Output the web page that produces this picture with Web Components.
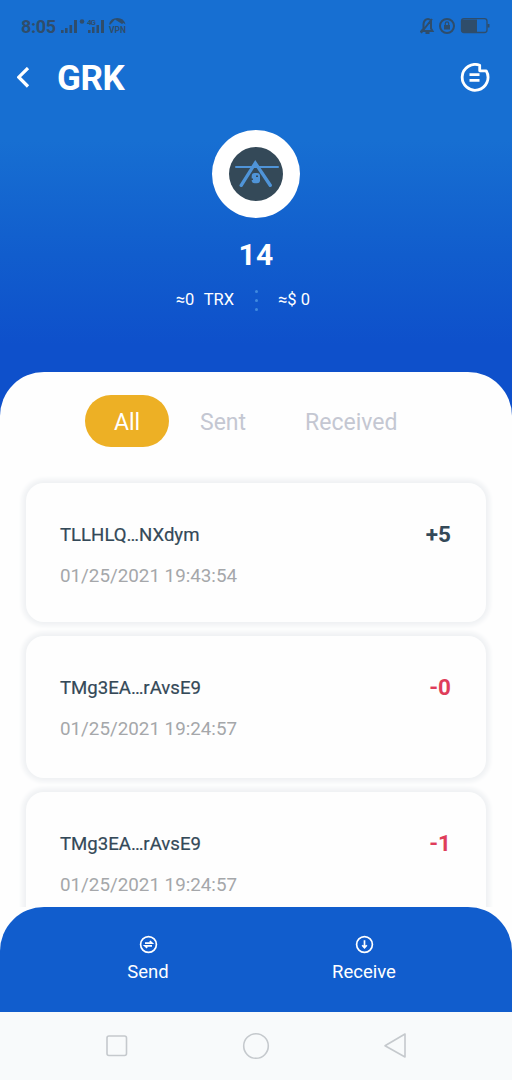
<!DOCTYPE html>
<html lang="en">
<head>
<meta charset="utf-8">
<title>GRK</title>
<style>
html,body{margin:0;height:100%}
body{font-family:Roboto,"Liberation Sans",sans-serif;background:#fefefe;overflow:hidden}
</style>
</head>
<body>
<wallet-app></wallet-app>
<script>
const define = (name, html) => {
  const t = document.createElement('template');
  t.innerHTML = html;
  customElements.define(name, class extends HTMLElement {
    constructor() {
      super();
      this.attachShadow({ mode: 'open' }).append(t.content.cloneNode(true));
    }
  });
};

define('status-bar', `
<style>
:host{display:flex;height:52px;box-sizing:border-box;padding:0 22px 0 21px;justify-content:space-between;align-items:center;color:#2f4d6b}
.g{display:flex;align-items:center}
time{font-size:18px;line-height:20px;font-weight:700;width:40px;letter-spacing:-.3px;padding-top:1px;box-sizing:border-box}
svg{display:block}
text{font-family:Roboto,sans-serif;font-weight:700}
</style>
<div class="g"><time>8:05</time>
<svg width="66" height="20" viewBox="61 16 66 20" fill="currentColor">
<path d="M61 30h2.600v3H61zM65 28h2.600v5H65zM69.500 25h2.600v8h-2.600zM74 20h3v13h-3zM88 30h2.500v3H88zM92 27h2.500v6H92zM96.500 25h2.500v8h-2.500zM101 20h3v13h-3z"/>
<circle cx="82" cy="21.500" r="2.300"/>
<text x="87" y="24.500" font-size="8" textLength="9">4G</text>
<path d="M109 24.500a8.500 8.500 0 0 1 16.500 0l-2-1.500-1.500 1-7-4.500-4.500 5z"/>
<text x="109" y="33" font-size="9" textLength="17" lengthAdjust="spacingAndGlyphs">VPN</text>
</svg></div>
<svg width="70" height="20" viewBox="420 16 70 20" fill="none" stroke="currentColor" stroke-width="2">
<path d="M421.500 31h11l-1.500-2.500V20.500c-3-3-7-1-7.500 3.500v4.500zM421 33l11-14M425.500 33h4"/>
<circle cx="447" cy="26" r="7"/><path d="M444 25h6v4.500h-6z" fill="currentColor" stroke="none"/><path d="M445.300 25v-1.500a1.700 1.700 0 0 1 3.400 0V25" stroke-width="1.200"/>
<rect x="461.500" y="18.700" width="25.500" height="13.800" rx="2.500" stroke-width="1.300"/><path d="M462 19.500h15v12.500h-15z" fill="currentColor" stroke="none"/><path d="M488.500 24v3.500"/>
</svg>`);

define('top-bar', `
<style>
:host{display:flex;height:52px;align-items:center;padding:0 22px 0 17px;box-sizing:border-box;color:#fff}
h1{margin:2px auto 0 27px;font-size:35px;line-height:52px;font-weight:700;letter-spacing:-.4px}
svg{display:block}
</style>
<svg width="13" height="22" viewBox="17 67 13 22" fill="none" stroke="#fff" stroke-width="3.200"><path d="M28 68 18.800 77.200 28 86.500"/></svg>
<h1>GRK</h1>
<svg width="30" height="30" viewBox="461 63 30 30" fill="none" stroke="#fff" stroke-width="2.800" stroke-linejoin="round"><path d="M480.700 65.300A12.900 12.900 0 1 0 487.200 70.800h-6.500z"/><path d="M470.500 74.700h10M470.500 80.300h10"/></svg>`);

define('token-summary', `
<style>
:host{display:flex;flex-direction:column;align-items:center;padding-top:26px;color:#fff}
.disc{width:88px;height:88px;border-radius:50%;background:#fff;display:grid;place-items:center}
.total{font-size:30px;line-height:36px;font-weight:700;margin-top:19px;letter-spacing:.2px}
.rates{display:grid;grid-template-columns:1fr 44px 1fr;align-items:center;width:512px;margin-top:16px;margin-bottom:1px;font-size:16.500px;line-height:22px}
.rates :first-child{text-align:right;word-spacing:5.500px}
.dots{justify-self:center;display:grid;gap:6px}
.dots i{width:3px;height:3px;border-radius:50%;background:#4089df}
</style>
<div class="disc"><svg width="56" height="56" viewBox="228 146 56 56"><circle cx="256" cy="174" r="27" fill="#344958"/>
<g stroke="#4f94d8" fill="none" stroke-linecap="round"><path d="M236 167h42" stroke-width="2"/><path d="M241.200 185.300 255.300 163l14.900 22.300" stroke-width="3.400"/></g><rect x="251.700" y="173" width="8.300" height="10.200" rx="3" fill="#4f94d8"/><path d="M251 178.500h2v1.500h-2zM256 175.500h2v1.500h-2z" fill="#344958"/></svg></div>
<div class="total">14</div>
<div class="rates"><span>≈0 TRX</span><span class="dots"><i></i><i></i><i></i></span><span>≈$ 0</span></div>`);

define('filter-tab', `
<style>
:host{display:block;box-sizing:border-box;height:52px;padding-top:3px;font-size:23px;line-height:50px;color:#c4c7d2}
:host([active]){background:#edb025;color:#fff;border-radius:26px;width:84px;text-align:center}
</style><slot></slot>`);

define('filter-tabs', `
<style>
:host{display:flex;padding:23px 0 0 85px}
::slotted(:nth-child(2)){margin-left:31px}
::slotted(:nth-child(3)){margin-left:59px}
</style><slot></slot>`);

define('transfer-card', `
<style>
:host{display:flex;box-sizing:border-box;height:139px;margin:0 26px;padding:38px 35px 0 34px;justify-content:space-between;border-radius:18px;background:#fefefe;box-shadow:0 0 4px 4px #f0f2f4}
.addr{font-size:18.600px;line-height:28px;color:#344958;-webkit-text-stroke:.2px}
.date{font-size:18.800px;line-height:28px;color:#a5a7aa;margin-top:13px}
.amount{font-size:22.500px;line-height:26px;font-weight:700;color:#344958}
:host([out]) .amount{color:#df3d5a}
:host([out]){height:142px}
</style>
<div><div class="addr"><slot name="address"></slot></div><div class="date"><slot name="date"></slot></div></div>
<div class="amount"><slot></slot></div>`);

define('action-button', `
<style>
:host{display:flex;flex-direction:column;align-items:center;color:#fff;font-size:18.500px;line-height:24px;gap:6px}
::slotted(svg){display:block}
</style><slot name="icon"></slot><span><slot></slot></span>`);

define('action-bar', `
<style>
:host{display:grid;grid-template-columns:216px 216px;justify-content:center;box-sizing:border-box;height:105px;padding-top:28px;background:#115dcd;border-radius:44px 44px 0 0}
</style>
<action-button><svg slot="icon" width="19" height="19" viewBox="0 0 19 19" fill="none" stroke="#fff" stroke-width="1.700"><circle cx="9.500" cy="9.500" r="7.900"/><path d="M6 8.200h7l-2.200-2M13 10.900H6l2.200 2"/></svg>Send</action-button>
<action-button><svg slot="icon" width="19" height="19" viewBox="0 0 19 19" fill="none" stroke="#fff" stroke-width="1.700"><circle cx="9.500" cy="9.500" r="7.900"/><path d="M9.500 5.300v7M7.200 10.200l2.300 2.600 2.300-2.600"/></svg>Receive</action-button>`);

define('system-nav', `
<style>
:host{display:flex;height:68px;background:#f8fafb;align-items:center;justify-content:center}
svg{display:block}
</style>
<svg width="512" height="68" viewBox="0 1012 512 68" fill="none" stroke="#c5c9cd" stroke-width="1.600" stroke-linejoin="round"><rect x="107" y="1036" width="19.500" height="19.500" rx="2"/><circle cx="256" cy="1046" r="12.300"/><path d="M385 1045.800 405 1034v23z"/></svg>`);

define('wallet-app', `
<style>
:host{display:flex;flex-direction:column;width:512px;height:1080px;background:linear-gradient(#176fd2 0,#176fd2 140px,#115dcd 255px,#0e50cb 345px,#0e50cb 100%)}
main{flex:1;min-height:0;margin-top:60px;display:flex;flex-direction:column;background:#fefefe;border-radius:44px 44px 0 0}
.list{display:flex;flex-direction:column;gap:14px;padding-top:36px;flex:1;min-height:0;overflow:hidden}
transfer-card{flex:none}
.bottom{background:#fefefe}
</style>
<status-bar></status-bar>
<top-bar></top-bar>
<token-summary></token-summary>
<main>
<filter-tabs><filter-tab active>All</filter-tab><filter-tab>Sent</filter-tab><filter-tab>Received</filter-tab></filter-tabs>
<div class="list">
<transfer-card><span slot="address">TLLHLQ…NXdym</span><span slot="date">01/25/2021 19:43:54</span>+5</transfer-card>
<transfer-card out><span slot="address">TMg3EA…rAvsE9</span><span slot="date">01/25/2021 19:24:57</span>-0</transfer-card>
<transfer-card out><span slot="address">TMg3EA…rAvsE9</span><span slot="date">01/25/2021 19:24:57</span>-1</transfer-card>
</div>
</main>
<div class="bottom"><action-bar></action-bar></div>
<system-nav></system-nav>`);
</script>
</body>
</html>
